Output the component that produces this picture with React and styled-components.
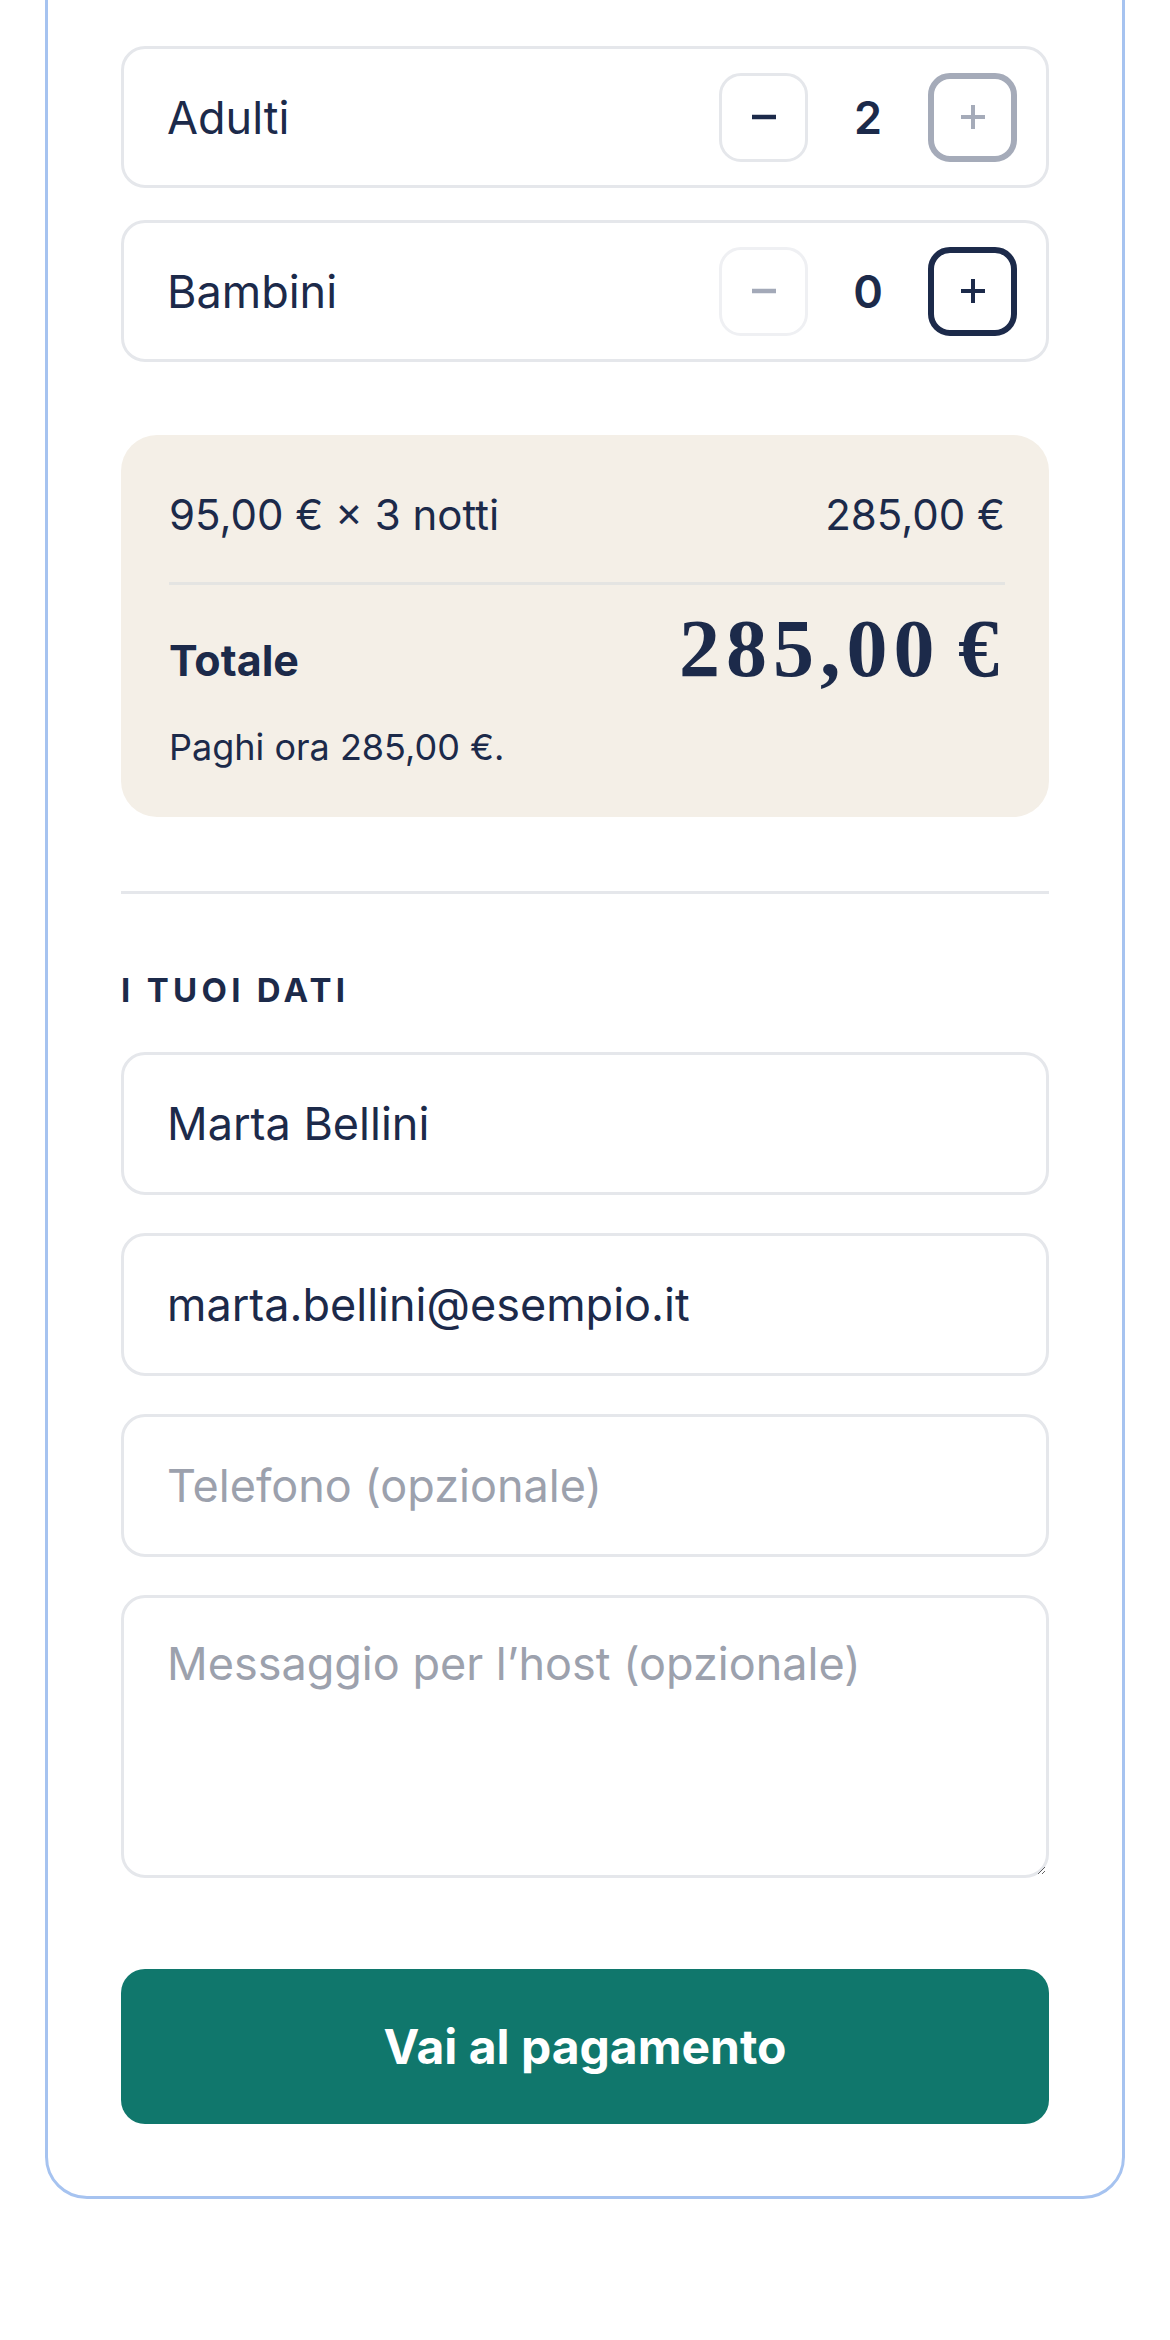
import React, { useState } from "react";
import styled, { createGlobalStyle, css } from "styled-components";

const NAVY = "#1c2a4a";
const LINE = "#e5e7eb";

const GlobalStyle = createGlobalStyle`
  * { box-sizing: border-box; }
  body {
    margin: 0;
    background: #ffffff;
    font-family: Inter, "Noto Sans", "Liberation Sans", sans-serif;
    color: ${NAVY};
  }
`;

const Page = styled.div`
  min-height: 2340px;
  padding: 0 42px 0 45px;
  overflow: hidden;
`;

const Card = styled.div`
  width: 1080px;
  margin-top: -111px;
  border: 3px solid #a6c3f0;
  border-radius: 42px;
  padding: 72px 73px 72px 73px;
  display: flex;
  flex-direction: column;
`;

const SectionLabel = styled.div`
  font-size: 33px;
  font-weight: 700;
  letter-spacing: 0.13em;
  text-transform: uppercase;
  line-height: 40px;
  color: ${NAVY};
  margin-bottom: 42px;
`;

const GuestList = styled.div`
  display: flex;
  flex-direction: column;
  gap: 32px;
`;

const GuestRow = styled.div`
  height: 142px;
  border: 3px solid ${LINE};
  border-radius: 24px;
  padding: 0 29px 0 43px;
  display: flex;
  align-items: center;
  justify-content: space-between;
`;

const GuestName = styled.span`
  font-size: 45px;
  color: ${NAVY};
`;

const Stepper = styled.div`
  display: flex;
  align-items: center;
`;

const stepVariants = {
  normal: css`
    border: 3px solid ${LINE};
    color: ${NAVY};
  `,
  disabled: css`
    border: 3px solid #eff0f3;
    color: #a3a9b8;
  `,
  muted: css`
    border: 6px solid #a5abb9;
    color: #a5abb9;
  `,
  active: css`
    border: 6px solid ${NAVY};
    color: ${NAVY};
  `,
};

const StepButton = styled.button`
  width: 89px;
  height: 89px;
  border-radius: 22px;
  background: #ffffff;
  padding: 0;
  display: flex;
  align-items: center;
  justify-content: center;
  cursor: pointer;
  ${(p) => stepVariants[p.$variant]}
`;

const StepValue = styled.span`
  min-width: 42px;
  margin: 0 39px;
  text-align: center;
  font-size: 45px;
  font-weight: 600;
  color: ${NAVY};
`;

const Summary = styled.div`
  margin-top: 73px;
  background: #f4efe7;
  border-radius: 36px;
  padding: 48px 44px 43px 48px;
`;

const SummaryLine = styled.div`
  display: flex;
  justify-content: space-between;
  font-size: 42px;
  line-height: 63px;
  color: ${NAVY};
`;

const SummaryRule = styled.div`
  height: 3px;
  background: #e4e4e2;
  margin-top: 36px;
`;

const TotalRow = styled.div`
  margin-top: 23px;
  display: flex;
  justify-content: space-between;
  align-items: baseline;
`;

const TotalLabel = styled.span`
  font-size: 43px;
  font-weight: 700;
  color: ${NAVY};
`;

const TotalAmount = styled.span`
  font-family: "Liberation Serif", "DejaVu Serif", serif;
  font-weight: 700;
  font-size: 82px;
  line-height: 82px;
  letter-spacing: 6px;
  word-spacing: -9px;
  color: ${NAVY};
`;

const PayNote = styled.div`
  margin-top: 30px;
  font-size: 36px;
  line-height: 54px;
  color: ${NAVY};
`;

const Divider = styled.hr`
  border: none;
  height: 3px;
  background: ${LINE};
  margin: 74px 0 76px;
`;

const Fields = styled.div`
  display: flex;
  flex-direction: column;
  gap: 38px;
`;

const fieldBase = css`
  width: 100%;
  border: 3px solid ${LINE};
  border-radius: 24px;
  background: #ffffff;
  font-family: Inter, "Noto Sans", "Liberation Sans", sans-serif;
  font-size: 45px;
  color: ${NAVY};
  outline: none;
  &::placeholder {
    color: #9ca1ad;
  }
`;

const Field = styled.input`
  ${fieldBase}
  height: 143px;
  padding: 0 43px;
`;

const MessageField = styled.textarea`
  ${fieldBase}
  height: 283px;
  padding: 39px 43px;
  line-height: 1.21;
  resize: vertical;
`;

const PayButton = styled.button`
  margin-top: 91px;
  height: 155px;
  border: none;
  border-radius: 24px;
  background: #10776c;
  color: #ffffff;
  font-family: Inter, "Noto Sans", "Liberation Sans", sans-serif;
  font-size: 48px;
  font-weight: 700;
  cursor: pointer;
`;

const MinusIcon = () => (
  <svg width="26" height="26" viewBox="0 0 26 26">
    <line x1="1" y1="13" x2="25" y2="13" stroke="currentColor" strokeWidth="4.5" />
  </svg>
);

const PlusIcon = () => (
  <svg width="26" height="26" viewBox="0 0 26 26">
    <line x1="1" y1="13" x2="25" y2="13" stroke="currentColor" strokeWidth="4" />
    <line x1="13" y1="1" x2="13" y2="25" stroke="currentColor" strokeWidth="4" />
  </svg>
);

const guests = [
  { id: "adults", label: "Adulti", count: 2, minus: "normal", plus: "muted" },
  { id: "kids", label: "Bambini", count: 0, minus: "disabled", plus: "active" },
];

const App = () => {
  const [name, setName] = useState("Marta Bellini");
  const [email, setEmail] = useState("marta.bellini@esempio.it");

  return (
    <Page>
      <GlobalStyle />
      <Card>
        <SectionLabel>Ospiti</SectionLabel>
        <GuestList>
          {guests.map((g) => (
            <GuestRow key={g.id}>
              <GuestName>{g.label}</GuestName>
              <Stepper>
                <StepButton $variant={g.minus} aria-label="Diminuisci">
                  <MinusIcon />
                </StepButton>
                <StepValue>{g.count}</StepValue>
                <StepButton $variant={g.plus} aria-label="Aumenta">
                  <PlusIcon />
                </StepButton>
              </Stepper>
            </GuestRow>
          ))}
        </GuestList>

        <Summary>
          <SummaryLine>
            <span>95,00 € × 3 notti</span>
            <span>285,00 €</span>
          </SummaryLine>
          <SummaryRule />
          <TotalRow>
            <TotalLabel>Totale</TotalLabel>
            <TotalAmount>285,00 €</TotalAmount>
          </TotalRow>
          <PayNote>Paghi ora 285,00 €.</PayNote>
        </Summary>

        <Divider />

        <SectionLabel>I tuoi dati</SectionLabel>
        <Fields>
          <Field value={name} onChange={(e) => setName(e.target.value)} />
          <Field
            type="email"
            value={email}
            onChange={(e) => setEmail(e.target.value)}
          />
          <Field placeholder="Telefono (opzionale)" />
          <MessageField placeholder="Messaggio per l’host (opzionale)" />
        </Fields>

        <PayButton>Vai al pagamento</PayButton>
      </Card>
    </Page>
  );
};

export default App;
